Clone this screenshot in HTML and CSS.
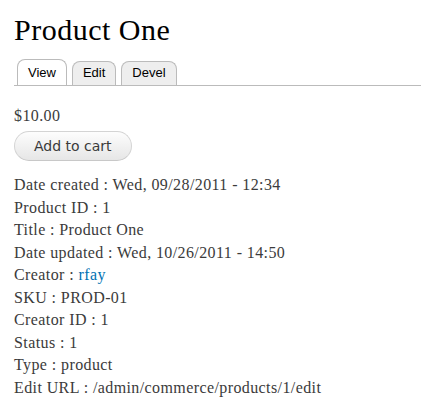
FILE: index.html
```html
<!DOCTYPE html>
<html>
<head>
<meta charset="utf-8">
<link rel="stylesheet" href="styles.css">
</head>
<body>
<div class="page">
  <h1 class="title">Product One</h1>
  <ul class="tabs">
    <li class="tab active"><a href="#">View</a></li>
    <li class="tab"><a href="#">Edit</a></li>
    <li class="tab"><a href="#">Devel</a></li>
  </ul>
  <div class="price">$10.00</div>
  <form class="cart-form">
    <button type="button" class="cart-btn">Add to cart</button>
  </form>
  <div class="fields">
    <div class="field">Date created : Wed, 09/28/2011 - 12:34</div>
    <div class="field">Product ID : 1</div>
    <div class="field">Title : Product One</div>
    <div class="field">Date updated : Wed, 10/26/2011 - 14:50</div>
    <div class="field">Creator : <a href="#" class="link">rfay</a></div>
    <div class="field">SKU : PROD-01</div>
    <div class="field">Creator ID : 1</div>
    <div class="field">Status : 1</div>
    <div class="field">Type : product</div>
    <div class="field">Edit URL : /admin/commerce/products/1/edit</div>
  </div>
</div>
</body>
</html>
```
FILE: styles.css
```css
html, body {
  margin: 0;
  padding: 0;
  background: #fff;
}
.page {
  padding: 0 1px 0 14px;
  font-family: "Liberation Serif", "Times New Roman", serif;
  color: #3b3b3b;
}
.title {
  margin: 12px 0 0;
  font-size: 30px;
  line-height: 36px;
  font-weight: normal;
  letter-spacing: 0.5px;
  color: #000;
}
.tabs {
  list-style: none;
  margin: 11px 0 0;
  padding: 0 0 0 3px;
  display: flex;
  align-items: flex-end;
  gap: 5px;
  border-bottom: 1px solid #bbb;
}
.tab a {
  display: block;
  font-family: "Liberation Sans", Arial, sans-serif;
  font-size: 13px;
  line-height: 16px;
  color: #000;
  text-decoration: none;
  background: #eee;
  border: 1px solid #bbb;
  border-bottom: none;
  border-radius: 8px 8px 0 0;
  padding: 3px 10px 4px;
}
.tab.active a {
  background: #fff;
  padding-top: 5px;
}
.price {
  margin-top: 19px;
  font-size: 16px;
  line-height: 22.5px;
  letter-spacing: 0.4px;
}
.cart-form {
  margin: 3.5px 0 0;
}
.cart-btn {
  font-family: "DejaVu Sans", Verdana, sans-serif;
  font-size: 14px;
  line-height: 20px;
  color: #3a3a3a;
  padding: 4px 19px;
  border: 1px solid #d4d4d4;
  border-bottom-color: #c8c8c8;
  border-radius: 15px;
  background: linear-gradient(#fdfdfd, #e6e6e6);
  margin: 0;
}
.fields {
  margin-top: 13px;
  font-size: 16px;
  line-height: 22.5px;
  letter-spacing: 0.4px;
}
.link {
  color: #0071b3;
  text-decoration: none;
}
```
